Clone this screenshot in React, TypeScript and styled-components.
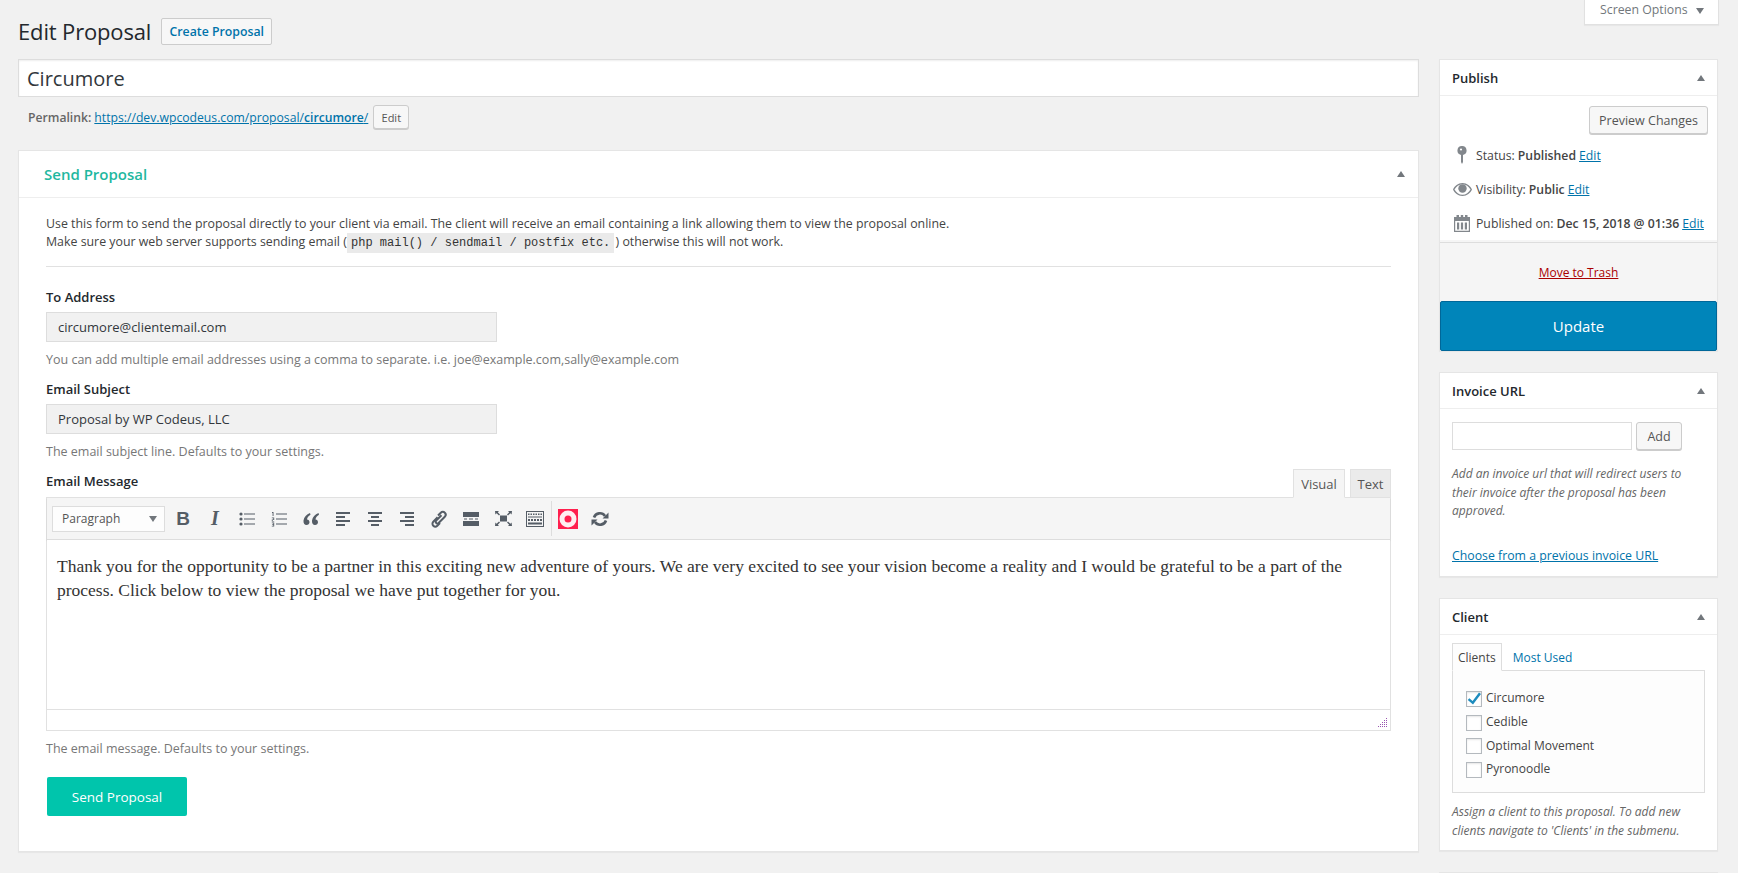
import React from 'react';
import styled, { createGlobalStyle } from 'styled-components';

const GlobalStyle = createGlobalStyle`
  html, body {
    margin: 0;
    height: 873px;
    overflow: hidden;
    background: #f1f1f1;
    font-family: 'Open Sans', sans-serif;
    font-size: 13px;
    color: #444;
  }
  * { box-sizing: border-box; }
`;

const Wrap = styled.div`
  padding: 0 20px 0 18px;
`;
const ScreenOptions = styled.div`
  float: right;
  width: 135px;
  height: 25px;
  margin-right: -1px;
  background: #fff;
  border: 1px solid #e1e1e1;
  border-top: 0;
  box-shadow: 0 1px 1px rgba(0, 0, 0, 0.04);
  display: flex;
  align-items: center;
  gap: 8px;
  padding: 0 0 3px 15px;
  font-size: 12.3px;
  color: #72777c;
  line-height: 1;
`;
const DownArrow = styled.span`
  width: 0;
  height: 0;
  border-left: 4px solid transparent;
  border-right: 4px solid transparent;
  border-top: 6px solid #72777c;
`;
const Header = styled.div`
  display: flex;
  align-items: center;
  gap: 10px;
  height: 59px;
  padding-top: 3px;
  margin-left: -1px;
`;
const PageTitle = styled.h1`
  margin: 0;
  font-size: 22px;
  font-weight: 400;
  letter-spacing: -0.15px;
  color: #23282d;
  line-height: 29px;
`;
const OutlineButton = styled.a`
  height: 27px;
  width: 111px;
  display: flex;
  align-items: center;
  justify-content: center;
  border: 1px solid #ccc;
  border-radius: 2px;
  background: #f7f7f7;
  color: #0073aa;
  font-weight: 600;
  font-size: 12.3px;
  padding-top: 1px;
`;
const Columns = styled.div`
  display: grid;
  grid-template-columns: 1401px 279px;
  column-gap: 20px;
  align-items: start;
`;
const MainColumn = styled.div`
  display: flex;
  flex-direction: column;
`;
const TitleField = styled.div`
  height: 38px;
  background: #fff;
  border: 1px solid #ddd;
  box-shadow: inset 0 1px 2px rgba(0, 0, 0, 0.07);
  padding: 1px 8px 0;
  font-size: 20px;
  line-height: 36px;
  color: #32373c;
`;
const PermalinkRow = styled.div`
  display: flex;
  align-items: center;
  height: 24px;
  margin: 8px 0 21px;
  padding-left: 10px;
  font-size: 12.2px;
  color: #666;
`;
const PermalinkLabel = styled.strong`
  font-weight: 600;
  margin-right: 3px;
`;
const TextLink = styled.a`
  color: #0073aa;
  text-decoration: underline;
`;
const TrashLink = styled.a`
  color: #a00;
  text-decoration: underline;
`;
const LinkSlug = styled.strong`
  font-weight: 600;
`;
const SmallButton = styled.span`
  display: flex;
  align-items: center;
  justify-content: center;
  width: 36px;
  height: 24px;
  margin-left: 5px;
  border: 1px solid #ccc;
  border-radius: 3px;
  background: #f7f7f7;
  box-shadow: 0 1px 0 #ccc;
  font-size: 11px;
  color: #555;
`;
const Card = styled.section`
  background: #fff;
  border: 1px solid #e5e5e5;
  box-shadow: 0 1px 1px rgba(0, 0, 0, 0.04);
`;
const MainCard = styled(Card)`
  height: 702px;
`;
const MainHeading = styled.div`
  display: flex;
  align-items: center;
  justify-content: space-between;
  height: 47px;
  padding: 0 13px 0 25px;
  border-bottom: 1px solid #eee;
  font-size: 15px;
  font-weight: 600;
  color: #1fb89f;
`;
const UpArrow = styled.span`
  width: 0;
  height: 0;
  border-left: 4px solid transparent;
  border-right: 4px solid transparent;
  border-bottom: 6px solid #72777c;
`;
const MainBody = styled.div`
  padding: 17px 27px 0;
`;
const Intro = styled.p`
  margin: 0;
  font-size: 12.36px;
  line-height: 18px;
  color: #444;
`;
const Code = styled.code`
  font-family: 'Liberation Mono', monospace;
  font-size: 12px;
  background: #eaeaea;
  padding: 3px 4px;
  margin: 0 -2px 0 -3px;
  color: #333;
`;
const Rule = styled.hr`
  margin: 14px 0 0;
  border: 0;
  border-top: 1px solid #e1e1e1;
`;
const FieldLabel = styled.label<{ $top: number }>`
  display: block;
  margin-top: ${(p) => p.$top}px;
  font-size: 13px;
  font-weight: 600;
  line-height: 18px;
  color: #23282d;
`;
const ReadonlyInput = styled.div`
  width: 451px;
  height: 30px;
  margin-top: 6px;
  background: #f1f1f1;
  border: 1px solid #ddd;
  padding: 0 11px;
  line-height: 28px;
  font-size: 13px;
  color: #32373c;
`;
const HelpText = styled.div`
  margin-top: 9px;
  font-size: 12.5px;
  line-height: 18px;
  color: #777;
`;
const EditorLabelRow = styled.div`
  display: flex;
  align-items: flex-end;
  justify-content: space-between;
  height: 35px;
  margin-top: 1px;
`;
const EditorLabel = styled.span`
  font-weight: 600;
  line-height: 18px;
  align-self: flex-start;
  margin-top: 10px;
  color: #23282d;
`;
const ModeTabs = styled.div`
  display: flex;
  gap: 5px;
  margin-bottom: -1px;
  position: relative;
`;
const ModeTab = styled.span<{ $active?: boolean }>`
  display: flex;
  align-items: center;
  justify-content: center;
  height: 29px;
  width: ${(p) => (p.$active ? 52 : 41)}px;
  border: 1px solid #e1e1e1;
  border-bottom-color: ${(p) => (p.$active ? '#f5f5f5' : '#e1e1e1')};
  background: ${(p) => (p.$active ? '#f5f5f5' : '#ebebeb')};
  font-size: 13px;
  color: #555;
`;
const Editor = styled.div`
  border: 1px solid #e1e1e1;
`;
const Toolbar = styled.div`
  display: flex;
  align-items: center;
  height: 42px;
  padding-left: 5px;
  background: #f5f5f5;
  box-shadow: 0 1px 1px rgba(0, 0, 0, 0.14);
  border-bottom: 1px solid #ddd;
`;
const FormatSelect = styled.div`
  display: flex;
  align-items: center;
  justify-content: space-between;
  width: 113px;
  height: 26px;
  margin-right: 2px;
  padding: 0 7px 0 9px;
  background: #fdfdfd;
  border: 1px solid #ddd;
  font-size: 12px;
  color: #555;
`;
const ToolIcon = styled.span`
  display: flex;
  align-items: center;
  justify-content: center;
  width: 32px;
  height: 28px;
  color: #555d66;
`;
const BoldGlyph = styled.span`
  font: 700 19px 'Liberation Sans', sans-serif;
`;
const ItalicGlyph = styled.span`
  font: italic 700 20px 'Liberation Serif', serif;
`;
const ToolDivider = styled.span`
  width: 1px;
  height: 35px;
  margin: 0 6px 0 0;
  background: #ddd;
`;
const BadgeSlot = styled.span`
  display: flex;
  margin-right: 6px;
`;
const EditorContent = styled.div`
  height: 169px;
  padding: 14px 10px 0;
  background: #fff;
  font-family: 'Liberation Serif', serif;
  font-size: 17.5px;
  line-height: 24px;
  color: #333;
`;
const StatusBar = styled.div`
  display: flex;
  align-items: flex-end;
  justify-content: flex-end;
  height: 21px;
  padding: 0 3px 3px 0;
  border-top: 1px solid #e1e1e1;
  background: #fff;
`;
const SendButton = styled.button`
  display: block;
  width: 140px;
  height: 39px;
  margin: 19px 0 0 1px;
  border: 0;
  border-radius: 2px;
  background: #00c5ac;
  color: #fff;
  font-family: inherit;
  font-size: 13.5px;
  font-weight: 500;
`;
const Side = styled.aside`
  display: flex;
  flex-direction: column;
  gap: 21px;
`;
const BoxHeading = styled.div`
  display: flex;
  align-items: center;
  justify-content: space-between;
  height: 36px;
  padding: 0 12px;
  border-bottom: 1px solid #eee;
  font-size: 13px;
  font-weight: 600;
  color: #23282d;
`;
const PublishBody = styled.div`
  padding: 10px 9px 0 12px;
`;
const PreviewRow = styled.div`
  display: flex;
  justify-content: flex-end;
  margin-bottom: 4px;
`;
const GrayButton = styled.span<{ $width: number; $height: number }>`
  display: flex;
  align-items: center;
  justify-content: center;
  width: ${(p) => p.$width}px;
  height: ${(p) => p.$height}px;
  border: 1px solid #ccc;
  border-radius: 3px;
  background: #f7f7f7;
  box-shadow: 0 1px 0 #ccc;
  font-size: 12.5px;
  color: #555;
`;
const InfoRow = styled.div`
  display: flex;
  align-items: center;
  height: 34px;
  margin-left: -2px;
  font-size: 12.25px;
  color: #444;
`;
const InfoIcon = styled.span`
  display: flex;
  justify-content: center;
  width: 24px;
  margin-right: 2px;
  color: #82878c;
`;
const InfoValue = styled.strong`
  font-weight: 600;
  margin: 0 3px;
`;
const TrashArea = styled.div`
  display: flex;
  align-items: center;
  justify-content: center;
  height: 59px;
  margin-top: 2px;
  background: #f5f5f5;
  border-top: 1px solid #ddd;
  font-size: 12px;
`;
const UpdateButton = styled.div`
  display: flex;
  align-items: center;
  justify-content: center;
  height: 50px;
  background: #0085ba;
  border: 1px solid #006799;
  border-radius: 2px;
  color: #fff;
  font-size: 15px;
  font-weight: 400;
`;
const PublishCard = styled(Card)`
  background: #f5f5f5;
  border-bottom: 0;
`;
const WhitePart = styled.div`
  background: #fff;
`;
const BoxBody = styled.div`
  padding: 13px 12px 0;
`;
const InvoiceRow = styled.div`
  display: flex;
  gap: 4px;
`;
const PlainInput = styled.div`
  width: 180px;
  height: 28px;
  background: #fff;
  border: 1px solid #ddd;
`;
const SideNote = styled.p<{ $line: number }>`
  margin: 0;
  font-size: 12px;
  font-style: italic;
  line-height: ${(p) => p.$line}px;
  color: #666;
`;
const InvoiceNote = styled(SideNote)`
  margin-top: 15px;
`;
const ChooseLink = styled.div`
  margin: 26px 0 11.500px;
  font-size: 12.3px;
  line-height: 18px;
`;
const ClientBody = styled.div`
  padding: 8px 12px 10px;
`;
const ClientTabs = styled.div`
  display: flex;
  align-items: flex-end;
  margin-bottom: -1px;
  position: relative;
`;
const ClientTab = styled.span<{ $active?: boolean }>`
  display: flex;
  align-items: center;
  height: 28px;
  padding: 0 ${(p) => (p.$active ? '5px' : '10px')};
  font-size: 12px;
  color: ${(p) => (p.$active ? '#444' : '#0073aa')};
  border: 1px solid ${(p) => (p.$active ? '#ddd' : 'transparent')};
  border-bottom-color: ${(p) => (p.$active ? '#fdfdfd' : 'transparent')};
  background: ${(p) => (p.$active ? '#fdfdfd' : 'transparent')};
`;
const ClientPanel = styled.div`
  height: 123px;
  padding: 15px 13px 0;
  border: 1px solid #ddd;
  background: #fdfdfd;
`;
const ClientRow = styled.label`
  display: flex;
  align-items: center;
  gap: 4px;
  height: 23.7px;
  font-size: 12px;
  color: #444;
`;
const Checkbox = styled.span`
  display: flex;
  align-items: center;
  justify-content: center;
  width: 16px;
  height: 16px;
  background: #fff;
  border: 1px solid #b4b9be;
  box-shadow: inset 0 1px 2px rgba(0, 0, 0, 0.1);
  margin-top: 2px;
`;
const ClientNote = styled(SideNote)`
  margin-top: 10px;
`;
const GhostCard = styled(Card)`
  height: 30px;
`;

const ListBullets = () => (
  <svg width="16" height="16" viewBox="0 0 16 16" fill="currentColor">
    <circle cx="2" cy="3" r="1.6" />
    <circle cx="2" cy="8" r="1.6" />
    <circle cx="2" cy="13" r="1.6" />
    <path d="M5 2.500h11v1H5zM5 7.500h11v1H5zM5 12.500h11v1H5z" />
  </svg>
);
const ListNumbers = () => (
  <svg width="16" height="16" viewBox="0 0 16 16" fill="currentColor">
    <path d="M1 1h1.500v4H1.600V2H1zM.8 6.500h2.400v2.600H1.700v.8h1.500v.7H.8V8.400h1.500V7.200H.8zM.8 11.500h2.400v4H.8v-.7h1.500v-.9H1.200v-.6h1.100v-1.100H.8z" />
    <path d="M5 2.500h11v1H5zM5 7.500h11v1H5zM5 12.500h11v1H5z" />
  </svg>
);
const Quote = () => (
  <svg width="16" height="14" viewBox="0 0 16 14" fill="currentColor">
    <path d="M7 1C3.500 2.500 1 5 .5 8.500.2 11 1.500 13 3.500 13 5.200 13 6.500 11.800 6.500 10.200 6.500 8.700 5.500 7.600 4 7.500 4.300 5.500 5.500 4 7.500 2.800zM15.500 1C12 2.500 9.500 5 9 8.500 8.700 11 10 13 12 13c1.700 0 3-1.200 3-2.800 0-1.500-1-2.600-2.500-2.700.3-2 1.500-3.500 3.500-4.700z" />
  </svg>
);
const AlignIcon = ({ kind }: { kind: 'left' | 'center' | 'right' }) => {
  const d = {
    left: 'M1 1h14v2H1zM1 5h9v2H1zM1 9h14v2H1zM1 13h9v2H1z',
    center: 'M1 1h14v2H1zM4 5h8v2H4zM1 9h14v2H1zM4 13h8v2H4z',
    right: 'M1 1h14v2H1zM6 5h9v2H6zM1 9h14v2H1zM6 13h9v2H6z',
  }[kind];
  return (
    <svg width="16" height="16" viewBox="0 0 16 16" fill="currentColor">
      <path d={d} />
    </svg>
  );
};
const LinkIcon = () => (
  <svg width="18" height="18" viewBox="0 0 18 18" fill="none" stroke="currentColor" strokeWidth="2">
    <path d="M8 5.500l2.800-2.800a2.800 2.800 0 0 1 4 4L8.600 13a1.700 1.700 0 0 1-2.400-2.400L11.500 5.300" />
    <path d="M7.600 7.300l-4.300 4.400a2.800 2.800 0 0 0 4 4L10 13" />
  </svg>
);
const MoreIcon = () => (
  <svg width="16" height="14" viewBox="0 0 16 14" fill="currentColor">
    <path d="M0 0h16v5H0zM0 9h16v5H0zM1 6.500h3v1H1zM6 6.500h4v1H6zM12 6.500h3v1h-3z" />
  </svg>
);
const FullscreenIcon = () => (
  <svg width="17" height="15" viewBox="0 0 17 15" fill="currentColor">
    <path d="M5 4.500h7v6H5zM0 0h4L2.800 1.200 5 3.400 4 4.400 1.600 2.200.4 3.500zM17 0h-4l1.200 1.200L12 3.400l1 1 2.400-2.200 1.200 1.300zM0 15h4l-1.200-1.200L5 11.600l-1-1-2.400 2.200L.4 11.500zM17 15h-4l1.200-1.200L12 11.600l1-1 2.400 2.200 1.200-1.300z" />
  </svg>
);
const KitchenIcon = () => (
  <svg width="18" height="16" viewBox="0 0 18 16" fill="currentColor">
    <path fillRule="evenodd" d="M0 0h18v16H0zM1 1v14h16V1z" />
    <path d="M2 2.500h1.500V4H2zM4.500 2.500H6V4H4.500zM7 2.500h1.500V4H7zM9.500 2.500H11V4H9.500zM12 2.500h1.500V4H12zM14.500 2.500H16V4h-1.500zM2 5.500h14v1H2zM2 8h2v2H2zM5 8h2v2H5zM8 8h2v2H8zM11 8h2v2h-2zM14 8h2v2h-2zM2 11.500h14v2H2z" />
  </svg>
);
const PluginBadge = () => (
  <svg width="20" height="20" viewBox="0 0 20 20">
    <rect width="20" height="20" fill="#ff1f4e" />
    <circle cx="10" cy="10" r="8.500" fill="#ffeef1" />
    <circle cx="10" cy="10" r="3.500" fill="#ff1f4e" />
  </svg>
);
const RefreshIcon = () => (
  <svg width="18" height="16" viewBox="0 0 18 16" fill="none" stroke="currentColor" strokeWidth="2.600">
    <path d="M3 6.500A6.200 6.200 0 0 1 14 5" />
    <path d="M15 9.500A6.200 6.200 0 0 1 4 11" />
    <path d="M17.500 1.500v6h-6zM.5 14.500v-6h6z" fill="currentColor" stroke="none" />
  </svg>
);
const Grip = () => (
  <svg width="9" height="9" viewBox="0 0 9 9" fill="#9a55b0" shapeRendering="crispEdges">
    <path d="M8 0h1v1H8zM8 2h1v1H8zM6 2h1v1H6zM8 4h1v1H8zM6 4h1v1H6zM4 4h1v1H4zM8 6h1v1H8zM6 6h1v1H6zM4 6h1v1H4zM2 6h1v1H2zM8 8h1v1H8zM6 8h1v1H6zM4 8h1v1H4zM2 8h1v1H2zM0 8h1v1H0z" />
  </svg>
);
const PinIcon = () => (
  <svg width="10" height="18" viewBox="0 0 10 18" fill="currentColor">
    <path d="M5 0a4.500 4.500 0 0 1 1 8.900V16l-1 2-1-2V8.900A4.500 4.500 0 0 1 5 0z" />
    <circle cx="4" cy="3.500" r="1.100" fill="#fff" />
  </svg>
);
const EyeIcon = () => (
  <svg width="19" height="13" viewBox="0 0 19 13" fill="currentColor">
    <path fillRule="evenodd" d="M9.500 0C14 0 17.500 3 19 6.500 17.500 10 14 13 9.500 13S1.500 10 0 6.500C1.500 3 5 0 9.500 0zM9.500 1.200C6 1.200 3.200 3.500 1.500 6.500 3.200 9.500 6 11.800 9.500 11.800s6.300-2.300 8-5.300c-1.700-3-4.500-5.300-8-5.300z" />
    <circle cx="9.500" cy="5.500" r="4.200" />
  </svg>
);
const CalendarIcon = () => (
  <svg width="16" height="17" viewBox="0 0 16 17" fill="currentColor">
    <path fillRule="evenodd" d="M0 2h2.500V0H5v2h1.800V0h2.400v2H11V0h2.500v2H16v15H0zM1.200 6v9.800h13.600V6z" />
    <path d="M3 7.500h2.200v7H3zM6.900 7.500h2.200v7H6.900zM10.800 7.500H13v7h-2.200z" />
  </svg>
);
const CheckMark = () => (
  <svg width="14" height="13" viewBox="0 0 14 13" fill="#1e8cbe">
    <path d="M12 .5l2 1.500L6 12.500 .8 8l1.500-1.800L5.600 9z" />
  </svg>
);

const clients = ['Circumore', 'Cedible', 'Optimal Movement', 'Pyronoodle'];

const App = () => {
  return (
    <Wrap>
      <GlobalStyle />
      <ScreenOptions>
        Screen Options <DownArrow />
      </ScreenOptions>
      <Header>
        <PageTitle>Edit Proposal</PageTitle>
        <OutlineButton>Create Proposal</OutlineButton>
      </Header>
      <Columns>
        <MainColumn>
          <TitleField>Circumore</TitleField>
          <PermalinkRow>
            <PermalinkLabel>Permalink:</PermalinkLabel>
            <TextLink>
              https://dev.wpcodeus.com/proposal/<LinkSlug>circumore</LinkSlug>/
            </TextLink>
            <SmallButton>Edit</SmallButton>
          </PermalinkRow>
          <MainCard>
            <MainHeading>
              Send Proposal
              <UpArrow />
            </MainHeading>
            <MainBody>
              <Intro>
                Use this form to send the proposal directly to your client via email. The client will receive an email
                containing a link allowing them to view the proposal online.
                <br />
                Make sure your web server supports sending email ( <Code>php mail() / sendmail / postfix etc.</Code> )
                otherwise this will not work.
              </Intro>
              <Rule />
              <FieldLabel $top={21}>To Address</FieldLabel>
              <ReadonlyInput>circumore@clientemail.com</ReadonlyInput>
              <HelpText>You can add multiple email addresses using a comma to separate. i.e. joe@example.com,sally@example.com</HelpText>
              <FieldLabel $top={11}>Email Subject</FieldLabel>
              <ReadonlyInput>Proposal by WP Codeus, LLC</ReadonlyInput>
              <HelpText>The email subject line. Defaults to your settings.</HelpText>
              <EditorLabelRow>
                <EditorLabel>Email Message</EditorLabel>
                <ModeTabs>
                  <ModeTab $active>Visual</ModeTab>
                  <ModeTab>Text</ModeTab>
                </ModeTabs>
              </EditorLabelRow>
              <Editor>
                <Toolbar>
                  <FormatSelect>
                    Paragraph <DownArrow />
                  </FormatSelect>
                  <ToolIcon>
                    <BoldGlyph>B</BoldGlyph>
                  </ToolIcon>
                  <ToolIcon>
                    <ItalicGlyph>I</ItalicGlyph>
                  </ToolIcon>
                  <ToolIcon>
                    <ListBullets />
                  </ToolIcon>
                  <ToolIcon>
                    <ListNumbers />
                  </ToolIcon>
                  <ToolIcon>
                    <Quote />
                  </ToolIcon>
                  <ToolIcon>
                    <AlignIcon kind="left" />
                  </ToolIcon>
                  <ToolIcon>
                    <AlignIcon kind="center" />
                  </ToolIcon>
                  <ToolIcon>
                    <AlignIcon kind="right" />
                  </ToolIcon>
                  <ToolIcon>
                    <LinkIcon />
                  </ToolIcon>
                  <ToolIcon>
                    <MoreIcon />
                  </ToolIcon>
                  <ToolIcon>
                    <FullscreenIcon />
                  </ToolIcon>
                  <ToolIcon>
                    <KitchenIcon />
                  </ToolIcon>
                  <ToolDivider />
                  <BadgeSlot>
                    <PluginBadge />
                  </BadgeSlot>
                  <ToolIcon>
                    <RefreshIcon />
                  </ToolIcon>
                </Toolbar>
                <EditorContent>
                  Thank you for the opportunity to be a partner in this exciting new adventure of yours. We are very
                  excited to see your vision become a reality and I would be grateful to be a part of the process. Click
                  below to view the proposal we have put together for you.
                </EditorContent>
                <StatusBar>
                  <Grip />
                </StatusBar>
              </Editor>
              <HelpText>The email message. Defaults to your settings.</HelpText>
              <SendButton>Send Proposal</SendButton>
            </MainBody>
          </MainCard>
        </MainColumn>
        <Side>
          <PublishCard>
            <WhitePart>
              <BoxHeading>
                Publish
                <UpArrow />
              </BoxHeading>
              <PublishBody>
                <PreviewRow>
                  <GrayButton $width={119} $height={28}>
                    Preview Changes
                  </GrayButton>
                </PreviewRow>
                <InfoRow>
                  <InfoIcon>
                    <PinIcon />
                  </InfoIcon>
                  Status:<InfoValue>Published</InfoValue>
                  <TextLink>Edit</TextLink>
                </InfoRow>
                <InfoRow>
                  <InfoIcon>
                    <EyeIcon />
                  </InfoIcon>
                  Visibility:<InfoValue>Public</InfoValue>
                  <TextLink>Edit</TextLink>
                </InfoRow>
                <InfoRow>
                  <InfoIcon>
                    <CalendarIcon />
                  </InfoIcon>
                  Published on:<InfoValue>Dec 15, 2018 @ 01:36</InfoValue>
                  <TextLink>Edit</TextLink>
                </InfoRow>
              </PublishBody>
            </WhitePart>
            <TrashArea>
              <TrashLink>Move to Trash</TrashLink>
            </TrashArea>
            <UpdateButton>Update</UpdateButton>
          </PublishCard>
          <Card>
            <BoxHeading>
              Invoice URL
              <UpArrow />
            </BoxHeading>
            <BoxBody>
              <InvoiceRow>
                <PlainInput />
                <GrayButton $width={46} $height={28}>
                  Add
                </GrayButton>
              </InvoiceRow>
              <InvoiceNote $line={18.5}>
                Add an invoice url that will redirect users to their invoice after the proposal has been approved.
              </InvoiceNote>
              <ChooseLink>
                <TextLink>Choose from a previous invoice URL</TextLink>
              </ChooseLink>
            </BoxBody>
          </Card>
          <Card>
            <BoxHeading>
              Client
              <UpArrow />
            </BoxHeading>
            <ClientBody>
              <ClientTabs>
                <ClientTab $active>Clients</ClientTab>
                <ClientTab>Most Used</ClientTab>
              </ClientTabs>
              <ClientPanel>
                {clients.map((name, i) => (
                  <ClientRow key={name}>
                    <Checkbox>{i === 0 && <CheckMark />}</Checkbox>
                    {name}
                  </ClientRow>
                ))}
              </ClientPanel>
              <ClientNote $line={18.5}>
                Assign a client to this proposal. To add new clients navigate to 'Clients' in the submenu.
              </ClientNote>
            </ClientBody>
          </Card>
          <GhostCard />
        </Side>
      </Columns>
    </Wrap>
  );
};

export default App;
